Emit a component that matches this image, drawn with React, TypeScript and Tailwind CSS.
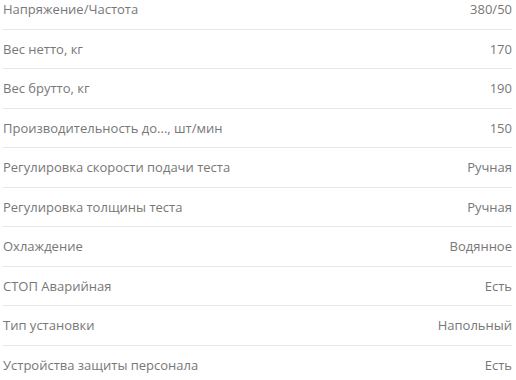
import React from "react";

const rows: [string, string][] = [
  ["Напряжение/Частота", "380/50"],
  ["Вес нетто, кг", "170"],
  ["Вес брутто, кг", "190"],
  ["Производительность до..., шт/мин", "150"],
  ["Регулировка скорости подачи теста", "Ручная"],
  ["Регулировка толщины теста", "Ручная"],
  ["Охлаждение", "Водянное"],
  ["СТОП Аварийная", "Есть"],
  ["Тип установки", "Напольный"],
  ["Устройства защиты персонала", "Есть"],
];

export default function App() {
  return (
    <div className="w-[516px] h-[380px] overflow-hidden bg-white">
      <div
        className="mt-[-10px] pl-[3px] pr-[4px] text-[13px] text-[#777777]"
        style={{ fontFamily: '"Open Sans", sans-serif' }}
      >
        {rows.map(([k, v]) => (
          <div
            key={k}
            className="flex justify-between items-center py-[10px] leading-[18.5px] border-b border-[#e6e6e6]"
          >
            <span>{k}</span>
            <span>{v}</span>
          </div>
        ))}
      </div>
    </div>
  );
}
